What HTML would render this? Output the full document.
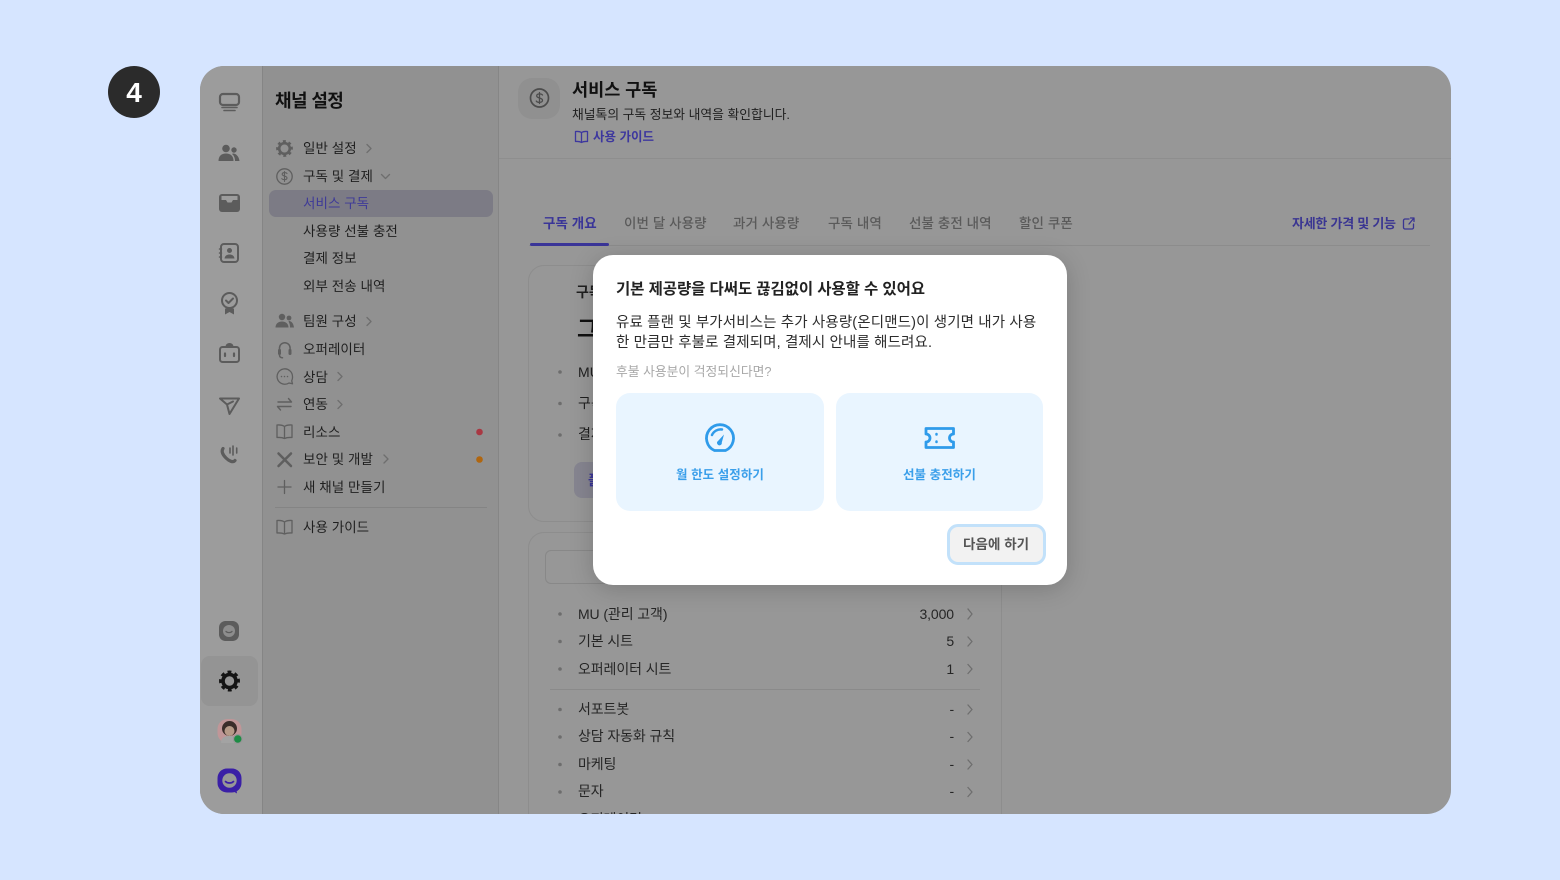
<!DOCTYPE html>
<html lang="ko"><head><meta charset="utf-8"><title>서비스 구독</title>
<style>
*{box-sizing:border-box;margin:0;padding:0}
html,body{width:1560px;height:880px;overflow:hidden;background:#d6e5ff}
body{position:relative;font-family:"Liberation Sans","Noto Sans CJK KR",sans-serif;color:#1c1c1c}
.num{position:absolute;left:108px;top:66px;width:52px;height:52px;border-radius:50%;background:#2b2b2b;color:#fff;font-size:28px;font-weight:700;line-height:54px;text-align:center}
.app{position:absolute;left:200px;top:66px;width:1251px;height:748px;border-radius:24px;overflow:hidden;background:#979797}
.in{position:absolute;left:-200px;top:-66px;width:1560px;height:880px}
.b{position:absolute}
.t{position:absolute;white-space:nowrap;line-height:20px;font-size:13.5px;letter-spacing:.05px;color:#1f1f1f}
.g{color:#5a5a5a;font-weight:500;letter-spacing:.08px}
.bd{font-weight:700}
.pu{color:#3a3592}
.tb{font-size:14px;letter-spacing:-.1px;color:#262626}
.modal{position:absolute;left:593px;top:255px;width:474px;height:330px;background:#fff;border-radius:20px;box-shadow:0 4px 24px rgba(0,0,0,.18)}
svg{position:absolute;left:0;top:0}
.r{text-align:right}
</style></head><body>
<div class="num">4</div>
<div class="app"><div class="in">
<div class="b" style="left:200px;top:66px;width:62px;height:748px;background:#9c9c9c"></div>
<div class="b" style="left:262px;top:66px;width:1px;height:748px;background:#858585"></div>
<div class="b" style="left:263px;top:66px;width:236px;height:748px;background:#919191"></div>
<div class="b" style="left:498px;top:66px;width:1px;height:748px;background:#868686"></div>
<div class="b" style="left:201px;top:656px;width:57px;height:50px;border-radius:9px;background:#949494"></div>
<div class="b" style="left:269px;top:190px;width:224px;height:27px;border-radius:7px;background:#7c7b85"></div>
<div class="b" style="left:275px;top:507px;width:212px;height:1px;background:#848484"></div>
<div class="b" style="left:499px;top:158px;width:952px;height:1px;background:#8e8e8e"></div>
<div class="b" style="left:518px;top:78px;width:42px;height:41px;border-radius:14px;background:#909090"></div>
<div class="b" style="left:529px;top:245px;width:901px;height:1px;background:#8c8c8c"></div>
<div class="b" style="left:530px;top:243px;width:79px;height:3px;border-radius:2px;background:#3a3598"></div>
<div class="b" style="left:528px;top:265px;width:474px;height:257px;border-radius:16px;border:1px solid #8d8d8d;background:#979797"></div>
<div class="b" style="left:528px;top:532px;width:474px;height:320px;border-radius:16px;border:1px solid #8d8d8d;background:#979797"></div>
<div class="b" style="left:545px;top:550px;width:120px;height:34px;border-radius:6px;border:1px solid #888"></div>
<div class="b" style="left:574px;top:462px;width:60px;height:36px;border-radius:8px;background:#868590"></div>
<div class="b" style="left:550px;top:689px;width:430px;height:1px;background:#8a8a8a"></div>

<svg width="1560" height="880" viewBox="0 0 1560 880" fill="none" stroke="#5c5c5c" stroke-width="2" stroke-linecap="round" stroke-linejoin="round">
<!-- rail -->
<rect x="220" y="94" width="19" height="11" rx="3" stroke-width="2.200"/>
<path d="M222 107.500h15M224 110.500h11" stroke-width="1.600"/>
<g fill="#5c5c5c" stroke="none">
<circle cx="226" cy="148.500" r="3.800"/><circle cx="234" cy="150" r="2.700"/>
<path d="M218.500 161c0-5 3-7.500 7.500-7.500s7.500 2.500 7.500 7.500z"/><path d="M233 153.500c3 0 6 3 6.500 7.500h-4.500c0-3-1-5.500-3-7z"/>
<path d="M222 194h15a3 3 0 0 1 3 3v12a3 3 0 0 1-3 3h-15a3 3 0 0 1-3-3v-12a3 3 0 0 1 3-3z"/>
</g>
<path d="M221.500 196h16v4h-4.500l-1.500 2.500h-4l-1.500-2.500h-4.500z" fill="#9c9c9c" stroke="none"/>
<rect x="221" y="244" width="17" height="18" rx="3"/><path d="M219.500 249h2M219.500 253h2M219.500 257h2" stroke-width="1.500"/>
<circle cx="229.500" cy="250.500" r="2.500" fill="#5c5c5c" stroke="none"/><path d="M224.500 258.500c.5-3 2.500-4 5-4s4.500 1 5 4z" fill="#5c5c5c" stroke="none"/>
<circle cx="229.500" cy="300.500" r="7.500"/><path d="M226 300.500l2.500 2.500 4.500-4.500"/><path d="M225 308.500v6l4.500-2.500 4.500 2.500v-6z" fill="#5c5c5c" stroke="none"/>
<rect x="220" y="347" width="19" height="15" rx="2.500"/><path d="M225.500 346.500a4 3.500 0 0 1 8 0z" fill="#5c5c5c" stroke="none"/>
<path d="M225 353.500v2.500M234 353.500v2.500" stroke-width="2.200"/>
<path d="M220 398.500h19L229.500 414l-2.500-9.500zM227 404.500l6-3"/>
<path d="M223 448.500c-2 3 0 6.500 3 9.500s7 5 9 2.500" stroke-width="3.200"/>
<path d="M233 446v9M236.700 448v5M230 448v5" stroke-width="1.600"/>
<rect x="219" y="621" width="20" height="20" rx="6.500" fill="#5c5c5c" stroke="none"/>
<circle cx="229" cy="631" r="6" fill="#8d8d8d" stroke="none"/><path d="M226 631.500c1.500 1.500 4.500 1.500 6 0" stroke="#5c5c5c" stroke-width="1.300"/>
<g stroke="#141414"><circle cx="229.500" cy="681" r="6.500" stroke-width="3.600"/><circle cx="229.500" cy="681" r="9.200" stroke-width="2.600" stroke-linecap="butt" stroke-dasharray="3.800 3.430" transform="rotate(-14 229.500 681)"/></g>
<!-- avatar -->
<rect x="217.500" y="719" width="24" height="24" rx="10" fill="#c09698" stroke="none"/>
<path d="M221 743c0-5 3-7 8.500-7s8.500 2 8.500 7z" fill="#a3a3a3" stroke="none"/>
<circle cx="229.500" cy="728.500" r="7.500" fill="#3b2d2a" stroke="none"/>
<circle cx="229.500" cy="731" r="5" fill="#b69a88" stroke="none"/>
<circle cx="237.800" cy="739" r="5" fill="#979797" stroke="none"/><circle cx="237.800" cy="739" r="3.700" fill="#1d8c45" stroke="none"/>
<!-- logo -->
<rect x="217.500" y="768.500" width="24" height="24" rx="9.500" fill="#3a1fa6" stroke="none"/><path d="M231 790l6 3.500-1-6z" fill="#3a1fa6" stroke="none"/>
<circle cx="229.500" cy="780.500" r="7.200" fill="#979797" stroke="none"/><path d="M225.500 781.500c2 2 6 2 8 0" stroke="#3a1fa6" stroke-width="1.700"/>

<!-- sidebar icons -->
<g stroke="#5f5f5f" stroke-width="1.600">
<circle cx="284.500" cy="148.500" r="5.300" stroke-width="2.600"/><circle cx="284.500" cy="148.500" r="7.300" stroke-width="2.200" stroke-linecap="butt" stroke-dasharray="2.900 2.830" transform="rotate(-14 284.500 148.500)"/>
<circle cx="284.500" cy="176.500" r="7.700" stroke-width="1.300"/>
<path d="M287 173.500c-1-1.200-4.500-1.500-4.800.6-.3 2.500 5 1.400 4.800 4-.2 2-4 2-5.200.6M284.500 171.500v10" stroke-width="1.100"/>
<g fill="#5f5f5f" stroke="none"><circle cx="282" cy="317" r="3.200"/><circle cx="289" cy="318" r="2.400"/><path d="M275.500 327.500c0-4 3-6 6.500-6s6.500 2 6.500 6z"/><path d="M289 321c2.500 0 4.500 2.500 5 6.500h-4c0-2.500-.5-4.500-1.500-6z"/>
<rect x="278" y="349" width="3" height="6" rx="1.200"/><rect x="288.500" y="349" width="3" height="6" rx="1.200"/></g>
<path d="M279.500 350v-2a5.300 5.300 0 0 1 10.600 0v2M279.500 355c0 2 1 2.700 3 2.700" stroke-width="1.500"/>
<path d="M292.500 376.500a7.700 7.700 0 1 0-3.500 6.500l3.500.8-.8-3a8 8 0 0 0 .8-4.300z" stroke-width="1.300"/><path d="M281.500 376.500h.01M284.500 376.500h.01M287.500 376.500h.01" stroke-width="1.500"/>
<path d="M278 402h13.500l-3-3.500M291 406.500h-13.500l3 3.500" stroke-width="1.400"/>
<path d="M284.500 426.500c-2-1.500-5-1.700-7.500-1.500v12.500c2.500-.2 5.500 0 7.500 1 2-1 5-1.200 7.500-1V425c-2.500-.2-5.500 0-7.500 1.500zv12" stroke-width="1.300"/>
<path d="M278.500 453.500l12.500 12.500M291 453.500L278.500 466" stroke-width="2.500"/>
<path d="M284.500 480.500v13M278 487h13" stroke-width="1.300"/>
<path d="M284.500 522c-2-1.500-5-1.700-7.500-1.500V533c2.500-.2 5.500 0 7.500 1 2-1 5-1.200 7.500-1v-12.500c-2.500-.2-5.500 0-7.500 1.500zv12" stroke-width="1.300"/>
</g>
<g stroke="#6e6e6e" stroke-width="1.300">
<path d="M367 144.500l4 4-4 4M338 372.500l4 4-4 4M338 400.500l4 4-4 4M367 317.500l4 4-4 4M384 455l4 4-4 4M381.500 174.500l4 4 4-4"/>
<path d="M968 609l4 5-4 5M968 637l4 4.500-4 4.500M968 664.500l4 4.500-4 4.500M968 705l4 4.500-4 4.500M968 732.500l4 4.500-4 4.500M968 760l4 4.500-4 4.500M968 787.500l4 4.500-4 4.500"/>
</g>
<circle cx="479.500" cy="432" r="3.300" fill="#a93843" stroke="none"/><circle cx="479.500" cy="459.500" r="3.300" fill="#b0660f" stroke="none"/>
<g fill="#6d6d6d" stroke="none"><circle cx="560" cy="372" r="1.800"/><circle cx="560" cy="403.500" r="1.800"/><circle cx="560" cy="435" r="1.800"/><circle cx="560" cy="614" r="1.800"/><circle cx="560" cy="641.500" r="1.800"/><circle cx="560" cy="669" r="1.800"/><circle cx="560" cy="709.500" r="1.800"/><circle cx="560" cy="737" r="1.800"/><circle cx="560" cy="764.500" r="1.800"/><circle cx="560" cy="792" r="1.800"/></g>
<!-- header -->
<circle cx="539.500" cy="98" r="9" stroke="#4c4c4c" stroke-width="1.700"/>
<path d="M542.500 95c-1-1.500-5.500-1.800-5.800.7-.3 3 6 1.700 5.800 4.800-.2 2.400-5 2.400-6.200.6M539.500 92.500v11" stroke="#4c4c4c" stroke-width="1.300"/>
<path d="M581.500 132.500c-1.500-1-4-1.200-6-1v10c2-.2 4.500 0 6 1 1.500-1 4-1.200 6-1v-10c-2-.2-4.500 0-6 1zv10" stroke="#3d379e" stroke-width="1.300"/>
<path d="M1409 219h-4a1.500 1.500 0 0 0-1.500 1.500v7a1.500 1.500 0 0 0 1.500 1.500h7a1.500 1.500 0 0 0 1.500-1.500v-3.500M1409 224l5-6M1410.500 218h3.500v3.500" stroke="#3a3592" stroke-width="1.300"/>
</svg>

<!-- sidebar text -->
<div class="t bd" style="left:275px;top:91px;font-size:18px;letter-spacing:-.6px;color:#111">채널 설정</div>
<div class="t" style="left:303px;top:139px">일반 설정</div>
<div class="t" style="left:303px;top:167px">구독 및 결제</div>
<div class="t" style="left:303px;top:194px;color:#3e3a98">서비스 구독</div>
<div class="t" style="left:303px;top:222px">사용량 선불 충전</div>
<div class="t" style="left:303px;top:249px">결제 정보</div>
<div class="t" style="left:303px;top:277px">외부 전송 내역</div>
<div class="t" style="left:303px;top:312px">팀원 구성</div>
<div class="t" style="left:303px;top:340px">오퍼레이터</div>
<div class="t" style="left:303px;top:368px">상담</div>
<div class="t" style="left:303px;top:395px">연동</div>
<div class="t" style="left:303px;top:423px">리소스</div>
<div class="t" style="left:303px;top:450px">보안 및 개발</div>
<div class="t" style="left:303px;top:478px">새 채널 만들기</div>
<div class="t" style="left:303px;top:518px">사용 가이드</div>
<!-- header text -->
<div class="t bd" style="left:572px;top:80px;font-size:17.500px;letter-spacing:0;color:#111">서비스 구독</div>
<div class="t" style="left:572px;top:105px;font-size:12.800px;letter-spacing:0">채널톡의 구독 정보와 내역을 확인합니다.</div>
<div class="t bd" style="left:593px;top:127px;font-size:12.500px;letter-spacing:0;color:#3d379e">사용 가이드</div>
<!-- tabs -->
<div class="t bd" style="left:543px;top:214px;color:#3a3598">구독 개요</div>
<div class="t g" style="left:624px;top:214px">이번 달 사용량</div>
<div class="t g" style="left:733px;top:214px">과거 사용량</div>
<div class="t g" style="left:828px;top:214px">구독 내역</div>
<div class="t g" style="left:909px;top:214px">선불 충전 내역</div>
<div class="t g" style="left:1019px;top:214px">할인 쿠폰</div>
<div class="t bd pu" style="left:1292px;top:214px;font-size:13px;letter-spacing:-.25px">자세한 가격 및 기능</div>
<!-- behind modal -->
<div class="t bd" style="left:576px;top:282px;font-size:14px">구독</div>
<div class="t bd" style="left:577px;top:316px;font-size:23px;line-height:26px;color:#111">그로스</div>
<div class="t" style="left:578px;top:362px;font-size:14px">MU</div>
<div class="t" style="left:578px;top:393px;font-size:14px">구독</div>
<div class="t" style="left:578px;top:424px;font-size:14px">결제</div>
<div class="t bd" style="left:588px;top:471px;color:#3a3598">플랜</div>
<!-- table -->
<div class="t tb" style="left:578px;top:604px">MU (관리 고객)</div>
<div class="t tb" style="left:578px;top:631px">기본 시트</div>
<div class="t tb" style="left:578px;top:659px">오퍼레이터 시트</div>
<div class="t tb" style="left:578px;top:699px">서포트봇</div>
<div class="t tb" style="left:578px;top:726px">상담 자동화 규칙</div>
<div class="t tb" style="left:578px;top:754px">마케팅</div>
<div class="t tb" style="left:578px;top:781px">문자</div>
<div class="t tb" style="left:578px;top:809px">오퍼레이터</div>
<div class="t tb r" style="left:900px;width:54px;top:604px">3,000</div>
<div class="t tb r" style="left:900px;width:54px;top:631px">5</div>
<div class="t tb r" style="left:900px;width:54px;top:659px">1</div>
<div class="t tb r" style="left:900px;width:54px;top:699px">-</div>
<div class="t tb r" style="left:900px;width:54px;top:726px">-</div>
<div class="t tb r" style="left:900px;width:54px;top:754px">-</div>
<div class="t tb r" style="left:900px;width:54px;top:781px">-</div>
</div></div>

<!-- modal -->
<div class="modal"></div>
<div class="t bd" style="left:616px;top:280px;font-size:15.500px;letter-spacing:-.08px;color:#222">기본 제공량을 다써도 끊김없이 사용할 수 있어요</div>
<div class="t" style="left:616px;top:313px;font-size:14.500px;letter-spacing:.13px;color:#2c2c2c">유료 플랜 및 부가서비스는 추가 사용량(온디맨드)이 생기면 내가 사용</div>
<div class="t" style="left:616px;top:333px;font-size:14.500px;letter-spacing:.13px;color:#2c2c2c">한 만큼만 후불로 결제되며, 결제시 안내를 해드려요.</div>
<div class="t" style="left:616px;top:362px;font-size:12.800px;letter-spacing:0;color:#a8a8a8">후불 사용분이 걱정되신다면?</div>
<div class="b" style="left:616px;top:393px;width:208px;height:118px;border-radius:14px;background:#e9f5ff"></div>
<div class="b" style="left:836px;top:393px;width:207px;height:118px;border-radius:14px;background:#e9f5ff"></div>
<svg width="1560" height="880" viewBox="0 0 1560 880" fill="none" stroke="#2f9bea" stroke-linecap="round" stroke-linejoin="round">
<path d="M725.500 450.500h-11a13.500 13.500 0 1 1 11 0z" stroke-width="2.800"/>
<path d="M712 435a9.500 9.500 0 0 1 10-5.500" stroke-width="2.500"/>
<path d="M718 441l6-6.500-2.200 8a2.400 2.400 0 1 1-3.800-1.500z" fill="#2f9bea" stroke="none"/>
<path d="M926 428.500h27.500v5.500a4 4 0 0 0 0 8v5.500H926V442a4 4 0 0 0 0-8z" stroke-width="2.800"/>
<path d="M936.500 434v.5M936.500 441.500v.5" stroke-width="2.500"/>
</svg>
<div class="t bd" style="left:676px;top:464.500px;font-size:12.500px;letter-spacing:.06px;color:#3a9fea">월 한도 설정하기</div>
<div class="t bd" style="left:903px;top:464.500px;font-size:12.500px;letter-spacing:.06px;color:#3a9fea">선불 충전하기</div>
<div class="b" style="left:947px;top:524px;width:99px;height:41px;border-radius:11px;background:#f2f2f2;border:3px solid #c2e1fa"></div>
<div class="t bd" style="left:963px;top:534.500px;font-size:13.500px;letter-spacing:.05px;color:#555">다음에 하기</div>
</body></html>
